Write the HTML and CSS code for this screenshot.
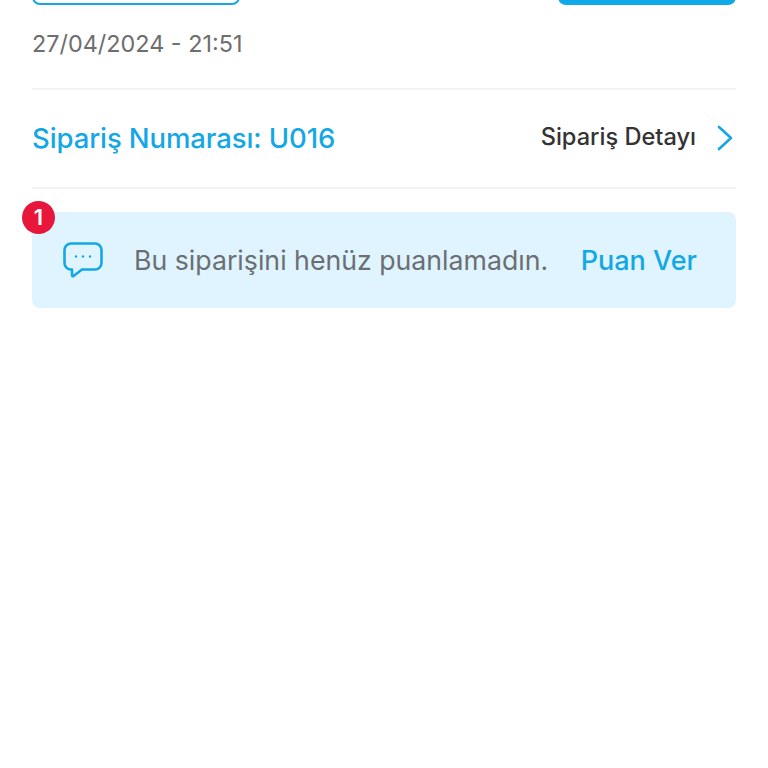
FILE: index.html
```html
<!DOCTYPE html>
<html lang="en">
<head>
    <meta charset="UTF-8">
    <meta name="viewport" content="width=device-width, initial-scale=1.0">
    <title>Sipariş</title>
    <link rel="stylesheet" href="styles.css">
</head>
<body>
    <div class="container">
        <div class="actions">
            <button class="btn btn-outline"></button>
            <button class="btn btn-filled"></button>
        </div>
        <div class="date">27/04/2024 - 21:51</div>
        <div class="order-row">
            <span class="order-no">Sipariş Numarası: U016</span>
            <a class="order-link">
                <span class="order-link-text">Sipariş Detayı</span>
                <svg class="chevron" width="16" height="26" viewBox="0 0 16 26" fill="none">
                    <path d="M2 2 L14 13 L2 24" stroke="#14a7e6" stroke-width="2.6" stroke-linecap="round" stroke-linejoin="round"/>
                </svg>
            </a>
        </div>
        <div class="rate-box">
            <span class="badge">1</span>
            <svg class="bubble" width="40" height="36" viewBox="0 0 40 36" fill="none">
                <path d="M8 1.5 H32 A6.5 6.5 0 0 1 38.5 8 V21 A6.5 6.5 0 0 1 32 27.5 H19 L10.5 34 Q9 34.8 9 33 V27.5 H8 A6.5 6.5 0 0 1 1.5 21 V8 A6.5 6.5 0 0 1 8 1.5 Z" stroke="#14a7e6" stroke-width="2.6" stroke-linejoin="round"/>
                <circle cx="13" cy="14.5" r="1.2" fill="#14a7e6"/>
                <circle cx="20" cy="14.5" r="1.2" fill="#14a7e6"/>
                <circle cx="27" cy="14.5" r="1.2" fill="#14a7e6"/>
            </svg>
            <span class="rate-text">Bu siparişini henüz puanlamadın.</span>
            <a class="rate-link">Puan Ver</a>
        </div>
    </div>
</body>
</html>
```

FILE: styles.css
```css
html, body {
    margin: 0;
    padding: 0;
    height: 100%;
    overflow: hidden;
    background: #fff;
}
body {
    font-family: Inter, "Liberation Sans", sans-serif;
}
.container {
    padding: 0 32px;
}
.actions {
    display: flex;
    justify-content: space-between;
    margin-top: -35px;
}
.btn {
    display: block;
    height: 40px;
    padding: 0;
    border-radius: 8px;
    box-sizing: border-box;
}
.btn-outline {
    width: 208px;
    background: #fff;
    border: 2px solid #14a7e6;
}
.btn-filled {
    width: 178px;
    background: #0fa9ea;
    border: none;
}
.date {
    margin-top: 24px;
    height: 59px;
    font-size: 23.4px;
    line-height: 30px;
    color: #6e6e6e;
    border-bottom: 2px solid #f3f3f3;
}
.order-row {
    display: flex;
    justify-content: space-between;
    align-items: center;
    height: 96px;
    padding-bottom: 1px;
    border-bottom: 2px solid #f3f3f3;
}
.order-no {
    font-size: 27.5px;
    font-weight: 500;
    letter-spacing: -0.1px;
    color: #14a7e6;
}
.order-link {
    display: flex;
    align-items: center;
    gap: 21px;
    font-size: 23.6px;
    font-weight: 500;
    color: #333;
}
.order-link-text {
    margin-bottom: 3px;
}
.chevron {
    margin-right: 3px;
}
.rate-box {
    position: relative;
    display: flex;
    align-items: center;
    height: 96px;
    margin-top: 23px;
    padding: 0 39px 0 31px;
    background: #dff4fe;
    border-radius: 8px;
}
.badge {
    position: absolute;
    left: -10px;
    top: -11px;
    width: 33px;
    height: 33px;
    border-radius: 50%;
    background: #e8163a;
    color: #fff;
    font-size: 22px;
    font-weight: 600;
    line-height: 33px;
    text-align: center;
}
.bubble {
    flex: none;
}
.rate-text {
    flex: 1;
    margin-left: 31px;
    font-size: 26.7px;
    color: #6b6f73;
}
.rate-link {
    font-size: 27px;
    font-weight: 500;
    color: #14a7e6;
}
```
